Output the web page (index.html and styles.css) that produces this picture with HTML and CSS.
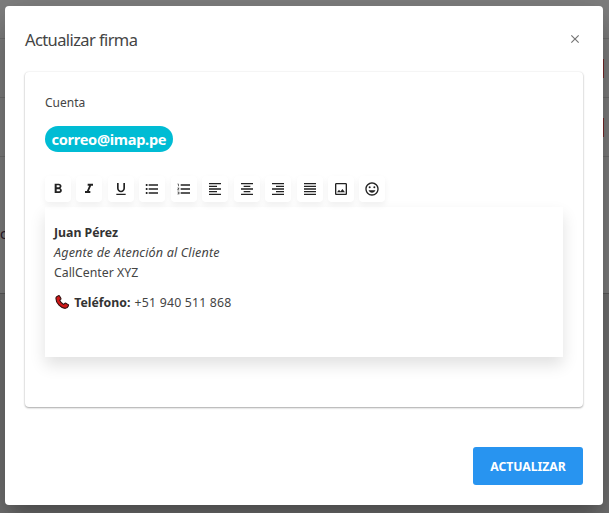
FILE: index.html
```html
<!DOCTYPE html>
<html lang="es">
<head>
<meta charset="utf-8">
<title>Actualizar firma</title>
<link rel="stylesheet" href="styles.css">
</head>
<body>
<div class="backdrop">
  <div class="bg-line l1"></div>
  <div class="bg-line l2"></div>
  <div class="bg-line l3"></div>
  <div class="bg-line l4"></div>
  <div class="bg-red r1"></div>
  <div class="bg-red r2"></div>
  <span class="bg-char">c</span>
</div>
<main class="dialog">
  <header class="dialog-head">
    <h1 class="dialog-title">Actualizar firma</h1>
    <button class="close" aria-label="Cerrar">
      <svg width="14" height="14" viewBox="0 0 24 24"><path d="M19 6.41 17.59 5 12 10.59 6.41 5 5 6.41 10.59 12 5 17.59 6.41 19 12 13.41 17.59 19 19 17.59 13.41 12z" fill="#757575"/></svg>
    </button>
  </header>
  <section class="card">
    <div class="label">Cuenta</div>
    <div class="chip-row"><span class="chip">correo@imap.pe</span></div>
    <div class="toolbar">
      <button class="tool"><svg viewBox="0 0 24 24"><path d="M15.6 10.79c.97-.67 1.65-1.77 1.65-2.79 0-2.26-1.75-4-4-4H7v14h7.04c2.09 0 3.71-1.7 3.71-3.79 0-1.52-.86-2.82-2.15-3.42zM10 6.5h3c.83 0 1.5.67 1.5 1.5s-.67 1.5-1.5 1.5h-3v-3zm3.5 9H10v-3h3.5c.83 0 1.5.67 1.5 1.5s-.67 1.5-1.5 1.5z"/></svg></button>
      <button class="tool"><svg viewBox="0 0 24 24"><path d="M10 4v3h2.21l-3.42 8H6v3h8v-3h-2.21l3.42-8H18V4z"/></svg></button>
      <button class="tool"><svg viewBox="0 0 24 24"><path d="M12 17c3.31 0 6-2.69 6-6V3h-2.5v8c0 1.93-1.57 3.5-3.5 3.5S8.500 12.930 8.500 11V3H6v8c0 3.310 2.690 6 6 6zm-7 2v2h14v-2H5z"/></svg></button>
      <button class="tool"><svg viewBox="0 0 24 24"><path d="M4 10.500c-.83 0-1.500.67-1.500 1.500s.67 1.500 1.500 1.500 1.500-.67 1.500-1.500-.67-1.500-1.500-1.500zm0-6c-.83 0-1.500.67-1.500 1.500S3.170 7.500 4 7.500 5.500 6.830 5.500 6 4.830 4.500 4 4.500zm0 12c-.83 0-1.500.68-1.500 1.500s.68 1.500 1.500 1.500 1.500-.68 1.500-1.500-.67-1.500-1.500-1.500zM7 19h14v-2H7v2zm0-6h14v-2H7v2zm0-8v2h14V5H7z"/></svg></button>
      <button class="tool"><svg viewBox="0 0 24 24"><path d="M2 17h2v.5H3v1h1v.5H2v1h3v-4H2v1zm1-9h1V4H2v1h1v3zm-1 3h1.800L2 13.100v.9h3v-1H3.200L5 10.900V10H2v1zm5-6v2h14V5H7zm0 14h14v-2H7v2zm0-6h14v-2H7v2z"/></svg></button>
      <button class="tool"><svg viewBox="0 0 24 24"><path d="M15 15H3v2h12v-2zm0-8H3v2h12V7zM3 13h18v-2H3v2zm0 8h18v-2H3v2zM3 3v2h18V3H3z"/></svg></button>
      <button class="tool"><svg viewBox="0 0 24 24"><path d="M7 15v2h10v-2H7zm-4 6h18v-2H3v2zm0-8h18v-2H3v2zm4-6v2h10V7H7zM3 3v2h18V3H3z"/></svg></button>
      <button class="tool"><svg viewBox="0 0 24 24"><path d="M3 21h18v-2H3v2zm6-4h12v-2H9v2zm-6-4h18v-2H3v2zm6-4h12V7H9v2zM3 3v2h18V3H3z"/></svg></button>
      <button class="tool"><svg viewBox="0 0 24 24"><path d="M3 21h18v-2H3v2zm0-4h18v-2H3v2zm0-4h18v-2H3v2zm0-4h18V7H3v2zm0-6v2h18V3H3z"/></svg></button>
      <button class="tool"><svg viewBox="0 0 24 24"><path d="M19 5v14H5V5h14m0-2H5c-1.100 0-2 .9-2 2v14c0 1.100.9 2 2 2h14c1.100 0 2-.9 2-2V5c0-1.100-.9-2-2-2zm-4.860 8.860-3 3.870L9 13.140 6 17h12l-3.860-5.140z"/></svg></button>
      <button class="tool"><svg viewBox="0 0 24 24"><path d="M11.990 2C6.470 2 2 6.480 2 12s4.470 10 9.990 10C17.520 22 22 17.520 22 12S17.520 2 11.990 2zM12 20c-4.420 0-8-3.580-8-8s3.580-8 8-8 8 3.580 8 8-3.580 8-8 8z"/><circle cx="15.500" cy="9.500" r="1.500"/><circle cx="8.500" cy="9.500" r="1.500"/><path d="M12 17.500c2.330 0 4.310-1.460 5.110-3.500H6.890c.8 2.040 2.780 3.500 5.110 3.500z"/></svg></button>
    </div>
    <div class="editor">
      <p class="line"><strong>Juan Pérez</strong></p>
      <p class="line"><em class="role">Agente de Atención al Cliente</em></p>
      <p class="line">CallCenter XYZ</p>
      <p class="line phone"><svg class="phone-icon" viewBox="0 0 24 24"><path d="M6.600 2.500c.6-.4 1.300-.2 1.700.4l2 3.400c.3.500.2 1.200-.2 1.600L8.600 9.300c.9 2.500 3.500 5.300 6 6.300l1.500-1.500c.4-.4 1.100-.5 1.600-.2l3.500 2c.6.300.8 1 .5 1.600-.8 1.800-2.300 3.800-4.500 4-6.600.4-14.500-8-14.300-14.800C2.500 4.700 4.700 3.300 6.600 2.500z" fill="#d01818" stroke="#301010" stroke-width="1.600"/></svg> <strong>Teléfono:</strong> <span class="number">+51 940 511 868</span></p>
    </div>
  </section>
  <footer class="dialog-foot">
    <button class="primary">ACTUALIZAR</button>
  </footer>
</main>
</body>
</html>
```

FILE: styles.css
```css
* { box-sizing: border-box; }
html, body { margin: 0; height: 100%; }
body {
  width: 609px;
  height: 513px;
  overflow: hidden;
  background: #808080;
  font-family: "Noto Sans", "Open Sans", sans-serif;
  color: #3d3d3d;
  display: flex;
  padding: 6px 6px 8px 5px;
}
.backdrop {
  position: absolute;
  inset: 0;
  overflow: hidden;
  background: linear-gradient(#808080 0, #808080 293px, #737373 293px);
}
.bg-line { position: absolute; left: 0; right: 0; height: 1px; background: #707070; }
.l1 { top: 38px; }
.l2 { top: 97px; }
.l3 { top: 156px; }
.l4 { top: 293px; background: #5c5c5c; }
.bg-red { position: absolute; left: 603px; width: 1px; background: #7a2a2a; }
.r1 { top: 59px; height: 19px; }
.r2 { top: 118px; height: 19px; }
.bg-char { position: absolute; left: 0; top: 224px; font-size: 14px; color: #2c1a2c; }
.dialog {
  position: relative;
  flex: 1;
  background: #fff;
  border-radius: 4px;
  box-shadow: 0 11px 15px -7px rgba(0,0,0,.2), 0 24px 38px 3px rgba(0,0,0,.14), 0 9px 46px 8px rgba(0,0,0,.12);
  padding: 0 20px 20px;
  display: flex;
  flex-direction: column;
}
.dialog-head { height: 66px; display: flex; align-items: center; justify-content: space-between; }
.dialog-title { margin: 2px 0 0; font-size: 16.500px; letter-spacing: -.6px; font-weight: 400; line-height: 24px; color: #444; }
.close { border: 0; background: none; padding: 0; width: 14px; height: 14px; margin: 0 1px 0 0; display: flex; }
.card {
  height: 335px;
  border-radius: 4px;
  background: #fff;
  box-shadow: 0 1px 2px rgba(0,0,0,.32), 0 0 2px rgba(0,0,0,.1);
  padding: 22px 20px 0;
}
.label { font-size: 12px; line-height: 18px; color: #444; }
.chip-row { margin-top: 14px; display: flex; }
.chip {
  height: 26px;
  line-height: 26px;
  padding: 0 7px 0 6.500px;
  border-radius: 13px;
  background: #00bcd4;
  color: #fff;
  font-size: 14.600px;
  font-weight: 700;
  letter-spacing: -.3px;
}
.toolbar { margin-top: 24px; display: flex; gap: 5.450px; padding-bottom: 5px; }
.tool {
  width: 26px;
  height: 26px;
  padding: 0;
  border: 0;
  border-radius: 4px;
  background: #fff;
  box-shadow: 0 3px 6px rgba(0,0,0,.06);
  display: flex;
  align-items: center;
  justify-content: center;
}
.tool svg { width: 16px; height: 16px; fill: #222; }
.editor {
  height: 150px;
  background: #fff;
  box-shadow: 0 8px 15px rgba(0,0,0,.12);
  padding: 16px 9px 0;
  font-size: 12.300px;
  color: #444;
}
.line { margin: 0; line-height: 20px; }
.line strong { color: #333; font-weight: 700; }
.role { font-size: 12.600px; letter-spacing: .14px; }
.number { letter-spacing: .2px; margin-left: 1px; }
.phone { margin-top: 10px; white-space: nowrap; }
.phone-icon { width: 16px; height: 16px; vertical-align: -3px; margin-right: 1px; }
.dialog-foot { margin-top: auto; display: flex; justify-content: flex-end; }
.primary {
  width: 110px;
  height: 38px;
  border: 0;
  border-radius: 3px;
  background: #2894f0;
  color: #fff;
  font: 700 12.200px "Noto Sans", "Open Sans", sans-serif;
}
```
